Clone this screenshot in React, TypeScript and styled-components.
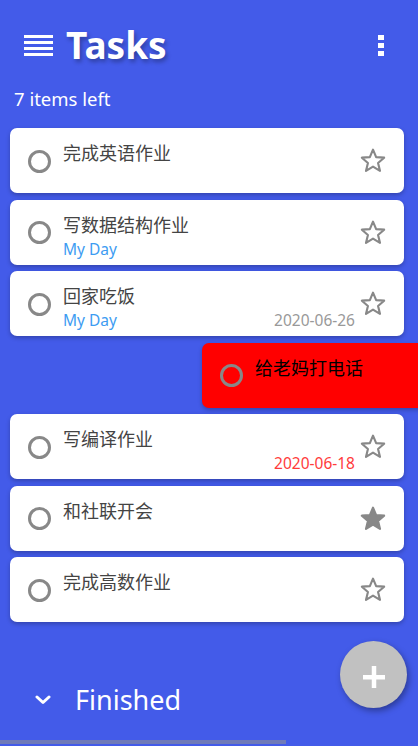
import styled, { createGlobalStyle } from 'styled-components'

type Task = {
  title: string
  myDay?: boolean
  date?: string
  overdue?: boolean
  starred?: boolean
  swiped?: boolean
}

const tasks: Task[] = [
  { title: '完成英语作业' },
  { title: '写数据结构作业', myDay: true },
  { title: '回家吃饭', myDay: true, date: '2020-06-26' },
  { title: '给老妈打电话', swiped: true },
  { title: '写编译作业', date: '2020-06-18', overdue: true },
  { title: '和社联开会', starred: true },
  { title: '完成高数作业' },
]

const GlobalStyle = createGlobalStyle`
  html, body {
    margin: 0;
    padding: 0;
    background: #435be9;
    font-family: 'Noto Sans', 'Noto Sans CJK SC', sans-serif;
  }
  body {
    overflow: hidden;
  }
`

export default function App() {
  return (
    <Page>
      <GlobalStyle />
      <Header>
        <MenuIcon>
          <span />
          <span />
          <span />
          <span />
        </MenuIcon>
        <Title>Tasks</Title>
        <MoreIcon>
          <span />
          <span />
          <span />
        </MoreIcon>
      </Header>
      <Count>7 items left</Count>
      <List>
        {tasks.map((t) => (
          <Card key={t.title} swiped={t.swiped}>
            <Check />
            <Body>
              <TaskTitle>{t.title}</TaskTitle>
              <Meta>
                {t.myDay && <MyDay>My Day</MyDay>}
                {t.date && <DueDate overdue={t.overdue}>{t.date}</DueDate>}
              </Meta>
            </Body>
            {!t.swiped && <Star filled={t.starred} />}
          </Card>
        ))}
      </List>
      <Finished>
        <svg width="16" height="10" viewBox="0 0 16 10">
          <path d="M2 2 L8 7.5 L14 2" fill="none" stroke="#fff" strokeWidth="3" strokeLinecap="round" strokeLinejoin="round" />
        </svg>
        <span>Finished</span>
      </Finished>
      <Fab aria-label="add">
        <svg width="22" height="22" viewBox="0 0 22 22">
          <rect x="0" y="9" width="22" height="4.5" fill="#fff" />
          <rect x="8.75" y="0" width="4.5" height="22" fill="#fff" />
        </svg>
      </Fab>
      <ScrollThumb />
    </Page>
  )
}

function Star({ filled }: { filled?: boolean }) {
  return (
    <StarBox>
      <svg width="28" height="27" viewBox="0 0 24 24">
        <path
          d="M12 2.4 L14.8 9 L21.9 9.5 L16.5 14.2 L18.2 21.2 L12 17.4 L5.8 21.2 L7.5 14.2 L2.1 9.5 L9.2 9 Z"
          fill={filled ? '#888' : 'none'}
          stroke="#888"
          strokeWidth="1.9"
          strokeLinejoin="round"
        />
      </svg>
    </StarBox>
  )
}

const Page = styled.div`
  position: relative;
  min-height: 746px;
  overflow: hidden;
`

const Header = styled.header`
  display: flex;
  align-items: center;
  height: 44px;
  padding: 23px 34px 0 24px;
`

const MenuIcon = styled.div`
  display: flex;
  flex-direction: column;
  gap: 3px;
  width: 29px;
  margin-right: 13px;
  span {
    display: block;
    height: 3px;
    background: #fff;
  }
`

const Title = styled.h1`
  margin: 0;
  flex: 1;
  color: #fff;
  font-size: 37px;
  font-weight: 700;
  line-height: 44px;
  text-shadow: 2px 3px 4px rgba(0, 0, 0, 0.3);
`

const MoreIcon = styled.div`
  display: flex;
  flex-direction: column;
  gap: 3px;
  span {
    display: block;
    width: 6px;
    height: 5px;
    background: #fff;
  }
`

const Count = styled.div`
  margin: 20px 0 0 14px;
  color: #fff;
  font-size: 18.5px;
  line-height: 23px;
`

const List = styled.div`
  display: grid;
  row-gap: 6.5px;
  margin: 18px 14px 0 10px;
`

const Card = styled.div<{ swiped?: boolean }>`
  display: flex;
  align-items: center;
  height: 65px;
  padding: 0 18px;
  border-radius: 7px;
  background: ${(p) => (p.swiped ? '#ff0000' : '#fff')};
  color: ${(p) => (p.swiped ? '#000' : '#444')};
  box-shadow: 0 2px 4px rgba(0, 0, 0, 0.25);
  transform: ${(p) => (p.swiped ? 'translateX(192px)' : 'none')};
`

const Check = styled.div`
  flex: none;
  width: 17px;
  height: 17px;
  border: 3px solid #888;
  border-radius: 50%;
  margin-right: 12px;
  margin-top: 1px;
`

const Body = styled.div`
  flex: 1;
  align-self: stretch;
  display: flex;
  flex-direction: column;
  padding-top: 14px;
`

const TaskTitle = styled.div`
  font-size: 18px;
  line-height: 23px;
`

const Meta = styled.div`
  display: flex;
  align-items: center;
  height: 20px;
  margin-top: 2px;
  font-size: 15.5px;
`

const MyDay = styled.span`
  color: #3d9cf2;
`

const DueDate = styled.span<{ overdue?: boolean }>`
  margin-left: auto;
  color: ${(p) => (p.overdue ? '#ff3b3b' : '#999')};
`

const StarBox = styled.div`
  flex: none;
  display: flex;
  margin-left: 4px;
  margin-right: -1px;
`

const Finished = styled.div`
  display: flex;
  align-items: center;
  gap: 24px;
  margin: 58px 0 0 35px;
  color: #fff;
  font-size: 27px;
  line-height: 40px;
`

const Fab = styled.button`
  position: absolute;
  right: 11px;
  top: 641px;
  width: 67px;
  height: 67px;
  border: none;
  border-radius: 50%;
  padding: 4px 0 0;
  display: flex;
  align-items: center;
  justify-content: center;
  background: #c1c1c1;
  box-shadow: 2px 3px 6px rgba(0, 0, 0, 0.35);
`

const ScrollThumb = styled.div`
  position: absolute;
  left: 0;
  top: 740px;
  width: 286px;
  height: 4px;
  background: #6f7ab9;
`
